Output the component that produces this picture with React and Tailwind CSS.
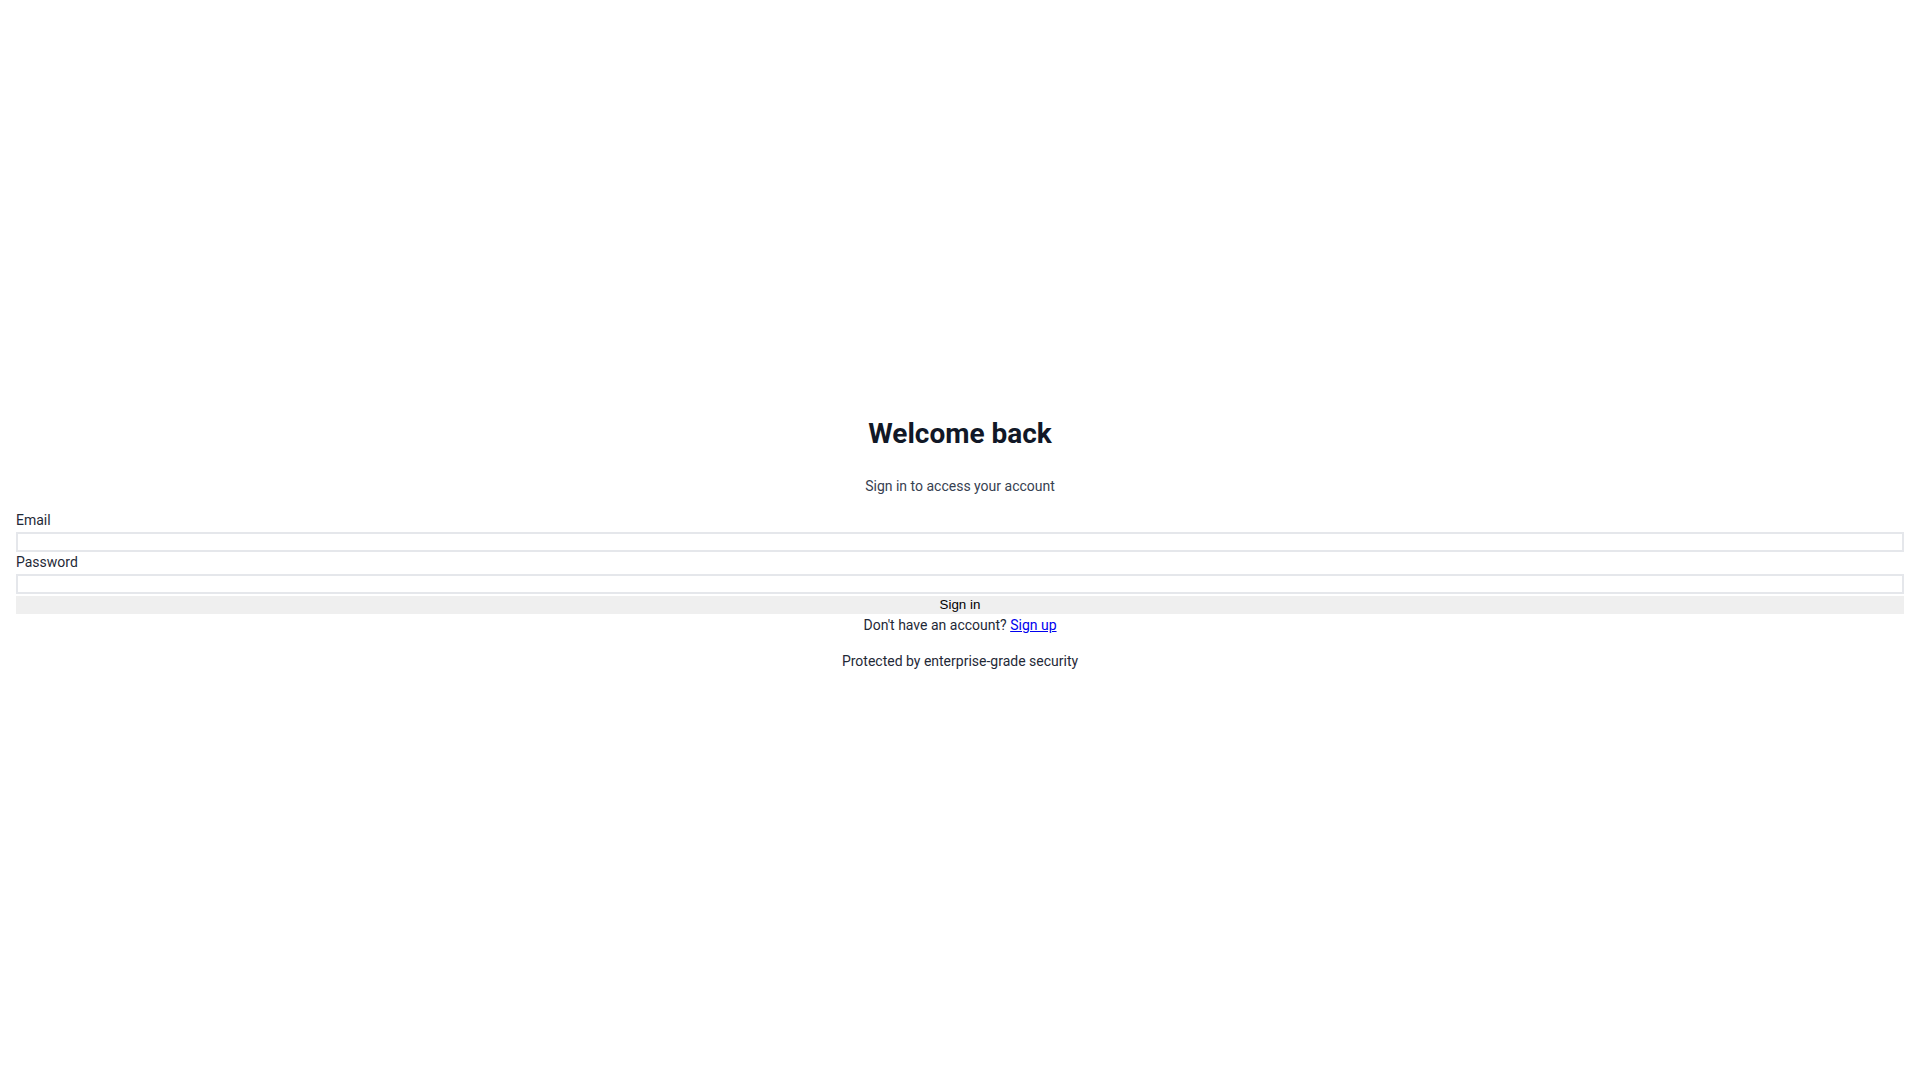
const App = () => {
  return (
    <div className="min-h-screen bg-white flex flex-col justify-center px-4 pt-[6px] font-['Roboto',sans-serif] text-[#1f2937]">
      {/* Header */}
      <div className="text-center">
        <h1 className="text-[28px] leading-9 font-bold text-[#111827]">Welcome back</h1>
        <p className="mt-6 text-sm text-[#374151]">Sign in to access your account</p>
      </div>

      {/* Form */}
      <form className="mt-[14px]" onSubmit={(e) => e.preventDefault()}>
        <label htmlFor="email" className="block text-sm text-[#1f2937]">
          Email
        </label>
        <input
          id="email"
          type="email"
          className="block w-full h-[20px] mt-[2px] border-2 border-[#e5e7eb] bg-white"
        />
        <label htmlFor="password" className="block text-sm text-[#1f2937]">
          Password
        </label>
        <input
          id="password"
          type="password"
          className="block w-full h-[20px] mt-[2px] border-2 border-[#e5e7eb] bg-white"
        />
        <button
          type="submit"
          className="block w-full h-[18px] mt-[2px] bg-[#efefef] text-[13.33px] leading-[18px] text-black font-['Liberation_Sans',Arial,sans-serif]"
        >
          Sign in
        </button>
      </form>

      <p className="mt-[1px] text-center text-sm text-[#1f2937]">
        Don't have an account?{" "}
        <a href="#" className="text-[#0000ee] underline">
          Sign up
        </a>
      </p>

      <p className="mt-4 text-center text-sm text-[#1f2937]">
        Protected by enterprise-grade security
      </p>
    </div>
  );
};

export default App;
